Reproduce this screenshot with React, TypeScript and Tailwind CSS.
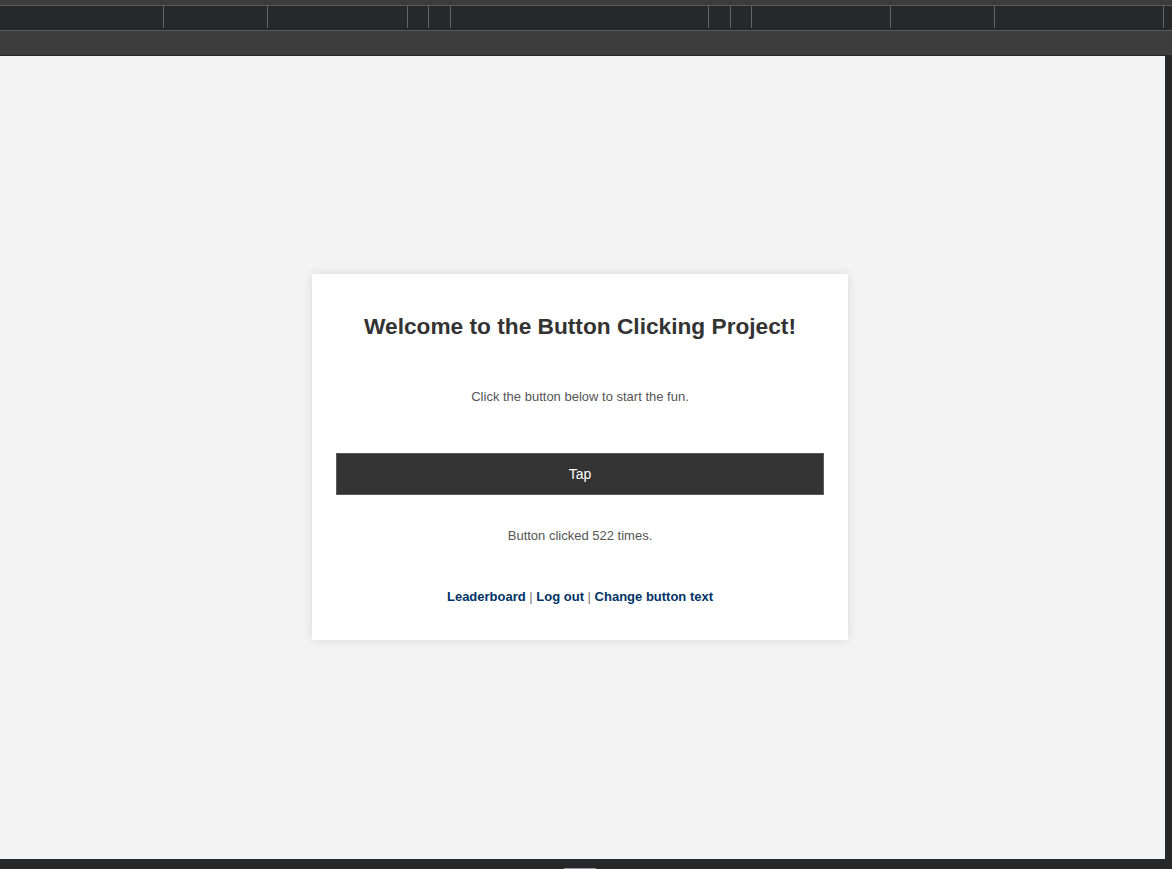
export default function App() {
  const dividers = [163, 267, 407, 428, 450, 708, 730, 751, 890, 994, 1163];
  const segs: number[] = [];
  let prev = 0;
  for (const d of dividers) {
    segs.push(d - prev);
    prev = d + 1;
  }
  return (
    <div className="w-[1172px] h-[869px] overflow-hidden flex flex-col bg-[#27282a]" style={{ fontFamily: '"Liberation Sans", Arial, sans-serif' }}>
      <div className="h-[5px] bg-[#3c3c3c]" />
      <div className="h-px bg-[#5a5a5a]" />
      <div className="h-[24px] bg-[#27282a] flex items-start">
        {segs.map((w, i) => (
          <div key={i} className="flex h-[22px]">
            <div style={{ width: w }} />
            <div className="w-px h-[22px] bg-[#646464]" />
          </div>
        ))}
      </div>
      <div className="h-px bg-[#5a5a5a]" />
      <div className="h-[24px] bg-[#3d3d3d]" />
      <div className="h-px bg-[#262626]" />
      <div className="flex h-[803px]">
        <div className="w-[1165px] h-full bg-[#f3f3f3] flex items-start justify-center pr-[5px] pt-[218px]">
          <div className="w-[536px] h-[366px] bg-white shadow-[0_0_10px_rgba(0,0,0,0.1)] px-6 pt-[38px] text-center">
            <h2 className="text-[22.7px] leading-[28px] font-bold text-[#333]">Welcome to the Button Clicking Project!</h2>
            <p className="mt-[47px] text-[13px] leading-[20px] text-[#555]">Click the button below to start the fun.</p>
            <button className="mt-[46px] w-full h-[42px] bg-[#333] border border-[#5a5a5a] text-white text-[14px]">Tap</button>
            <p className="mt-[31px] text-[13px] leading-[20px] text-[#555]">Button clicked 522 times.</p>
            <p className="mt-[41px] text-[13px] leading-[20px] text-[#777]">
              <a className="font-bold text-[#003366]">Leaderboard</a> | <a className="font-bold text-[#003366]">Log out</a> | <a className="font-bold text-[#003366]">Change button text</a>
            </p>
          </div>
        </div>
        <div className="flex-1 bg-[#27282a]" />
      </div>
      <div className="h-[10px] bg-[#27282a] relative">
        <div className="absolute left-[564px] top-[9px] w-[32px] h-[2px] bg-[#9a9a9a]" />
      </div>
    </div>
  );
}
